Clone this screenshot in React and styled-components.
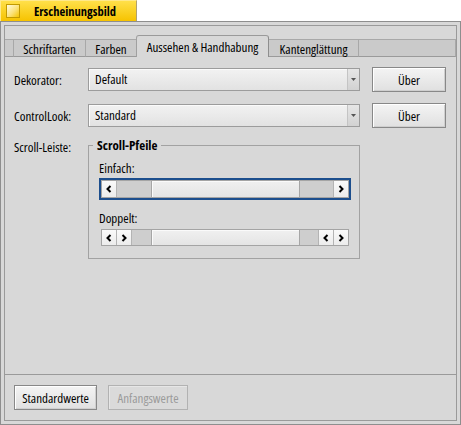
import React from 'react';
import styled, { createGlobalStyle } from 'styled-components';

const Global = createGlobalStyle`
  html, body {
    margin: 0;
    background: #fff;
  }
  body {
    font-family: "Open Sans", "Noto Sans", sans-serif;
    font-stretch: 75%;
    font-size: 13px;
    color: #000;
  }
`;

const Page = styled.div`
  width: 461px;
  height: 425px;
  display: flex;
  flex-direction: column;
`;

const TitleTab = styled.div`
  width: 137px;
  height: 21px;
  box-sizing: border-box;
  display: flex;
  align-items: center;
  padding-left: 5px;
  background: linear-gradient(#ffe04a, #f6c300);
  border-top: 1px solid #ffe98a;
  border-left: 1px solid #ffe98a;
  border-right: 1px solid #b0a170;
`;

const TabIcon = styled.div`
  width: 14px;
  height: 14px;
  box-sizing: border-box;
  border: 1px solid #c29a00;
  background: linear-gradient(135deg, #fffbe0, #fbe27a 55%, #f5c500);
`;

const Title = styled.span`
  flex: 1;
  text-align: center;
  font-weight: 700;
  font-size: 12.5px;
  margin-right: 6px;
`;

const Frame = styled.div`
  flex: 1;
  display: flex;
  border: 1px solid #8e8e8e;
  padding: 3px;
  background: #d8d8d8;
`;

const Inner = styled.div`
  flex: 1;
  display: flex;
  flex-direction: column;
  border: 1px solid #9a9a9a;
  background: #d8d8d8;
`;

const TabStrip = styled.div`
  height: 31px;
  display: flex;
  align-items: flex-end;
`;

const Tab = styled.div`
  box-sizing: border-box;
  width: ${(p) => (p.$w ? `${p.$w}px` : 'auto')};
  flex: ${(p) => (p.$fill ? 1 : 'none')};
  height: ${(p) => (p.$active ? 22 : 18)}px;
  display: flex;
  align-items: center;
  justify-content: center;
  white-space: nowrap;
  background: ${(p) => (p.$active ? '#d8d8d8' : '#cacaca')};
  border-top: 1px solid ${(p) => (p.$active ? '#9a9a9a' : '#a8a8a8')};
  border-right: 1px solid ${(p) => (p.$active ? '#8e8e8e' : '#a8a8a8')};
  border-left: ${(p) => (p.$active ? '1px solid #a0a0a0' : 'none')};
  border-bottom: ${(p) => (p.$active ? 'none' : '1px solid #9a9a9a')};
  border-radius: ${(p) => (p.$active ? '3px 3px 0 0' : '0')};
  padding-top: ${(p) => (p.$active ? 0 : 1)}px;
  margin-left: ${(p) => (p.$active ? -1 : 0)}px;
`;

const Panel = styled.div`
  flex: 1;
  border-bottom: 1px solid #9a9a9a;
  padding: 10px 0 0 9px;
`;

const Form = styled.div`
  display: grid;
  grid-template-columns: 62px 272px 74px;
  grid-template-rows: 25px 25px auto;
  column-gap: 12px;
  row-gap: 11px;
  align-items: center;
`;

const Label = styled.span`
  white-space: nowrap;
  align-self: ${(p) => (p.$top ? 'start' : 'center')};
  line-height: 14px;
  margin-top: ${(p) => (p.$top ? 1 : 0)}px;
`;

const Menu = styled.div`
  height: 23px;
  box-sizing: border-box;
  display: flex;
  border: 1px solid #9c9c9c;
  background: linear-gradient(#f2f2f2, #e2e2e2);
  box-shadow: inset 1px 1px 0 #fbfbfb;
`;

const MenuText = styled.span`
  flex: 1;
  padding-left: 6px;
  line-height: 21px;
`;

const MenuArrow = styled.div`
  width: 11px;
  display: flex;
  align-items: center;
  justify-content: center;
  border-left: 1px solid #c4c4c4;
  background: linear-gradient(#e6e6e6, #d2d2d2);
`;

const Button = styled.div`
  height: 25px;
  box-sizing: border-box;
  display: flex;
  align-items: center;
  justify-content: center;
  padding: 0 8px;
  white-space: nowrap;
  border: 1px solid ${(p) => (p.$disabled ? '#b2b2b2' : '#888')};
  color: ${(p) => (p.$disabled ? '#9a9a9a' : '#000')};
  background: ${(p) =>
    p.$disabled ? '#dadada' : 'linear-gradient(#f4f4f4, #e0e0e0)'};
  box-shadow: ${(p) =>
    p.$disabled ? 'inset 1px 1px 0 #e6e6e6' : 'inset 1px 1px 0 #fff, inset -1px -1px 0 #cfcfcf'};
  width: ${(p) => (p.$w ? `${p.$w}px` : 'auto')};
`;

const Group = styled.fieldset`
  grid-column: 2;
  margin: 0;
  padding: 0 10px 12px 10px;
  border: 1px solid #a2a2a2;
  min-width: 0;
`;

const Legend = styled.legend`
  font-weight: 700;
  font-size: 13px;
  line-height: 12px;
  padding: 0 4px;
  margin-left: -6px;
`;

const SubLabel = styled.div`
  line-height: 16px;
  margin-top: ${(p) => p.$mt}px;
`;

const ScrollBar = styled.div`
  width: 248px;
  height: ${(p) => p.$h}px;
  box-sizing: border-box;
  margin: ${(p) => p.$mt}px 0 0 2px;
  display: flex;
  border: 1px solid #a4a4a4;
  outline: ${(p) => (p.$focus ? '2px solid #1c4e8d' : 'none')};
  background: #cfcfcf;
`;

const ArrowBtn = styled.div`
  width: 14px;
  display: flex;
  align-items: center;
  justify-content: center;
  background: linear-gradient(#fafafa, #ececec);
  border-left: ${(p) => (p.$sepLeft ? '1px solid #b4b4b4' : 'none')};
  border-right: ${(p) => (p.$sepRight ? '1px solid #b4b4b4' : 'none')};
`;

const Track = styled.div`
  flex: 1;
  background: #cecece;
`;

const Thumb = styled.div`
  width: 149px;
  box-sizing: border-box;
  border-left: 1px solid #a6a6a6;
  border-right: 1px solid #a6a6a6;
  background: linear-gradient(#f0f0f0, #e4e4e4);
  box-shadow: inset 1px 1px 0 #fafafa;
`;

const Footer = styled.div`
  height: 45px;
  display: flex;
  align-items: center;
  gap: 11px;
  padding-left: 9px;
`;

const Chevron = ({ dir }) => (
  <svg width="6" height="8" viewBox="0 0 6 8">
    <path
      d={dir === 'left' ? 'M4.5 1 L1.5 4 L4.5 7' : 'M1.5 1 L4.5 4 L1.5 7'}
      fill="none"
      stroke="#000"
      strokeWidth="2"
    />
  </svg>
);

const DownTriangle = () => (
  <svg width="5" height="3" viewBox="0 0 5 3">
    <path d="M0 0 H5 L2.5 3 Z" fill="#555" />
  </svg>
);

function ScrollArrows({ double, side }) {
  if (!double) {
    return side === 'left' ? (
      <ArrowBtn $sepRight>
        <Chevron dir="left" />
      </ArrowBtn>
    ) : (
      <ArrowBtn $sepLeft>
        <Chevron dir="right" />
      </ArrowBtn>
    );
  }
  return (
    <>
      <ArrowBtn $sepLeft={side === 'right'} $sepRight>
        <Chevron dir="left" />
      </ArrowBtn>
      <ArrowBtn $sepRight={side === 'left'}>
        <Chevron dir="right" />
      </ArrowBtn>
    </>
  );
}

function Scroller({ double, focus, mt, h }) {
  return (
    <ScrollBar $focus={focus} $mt={mt} $h={h}>
      <ScrollArrows double={double} side="left" />
      <Track />
      <Thumb />
      <Track />
      <ScrollArrows double={double} side="right" />
    </ScrollBar>
  );
}

export default function App() {
  return (
    <Page>
      <Global />
      <TitleTab>
        <TabIcon />
        <Title>Erscheinungsbild</Title>
      </TitleTab>
      <Frame>
        <Inner>
          <TabStrip>
            <Tab $w={9} />
            <Tab $w={72}>Schriftarten</Tab>
            <Tab $w={51}>Farben</Tab>
            <Tab $w={133} $active>
              Aussehen &amp; Handhabung
            </Tab>
            <Tab $w={90}>Kantenglättung</Tab>
            <Tab $fill />
          </TabStrip>
          <Panel>
            <Form>
              <Label>Dekorator:</Label>
              <Menu>
                <MenuText>Default</MenuText>
                <MenuArrow>
                  <DownTriangle />
                </MenuArrow>
              </Menu>
              <Button>Über</Button>

              <Label>ControlLook:</Label>
              <Menu>
                <MenuText>Standard</MenuText>
                <MenuArrow>
                  <DownTriangle />
                </MenuArrow>
              </Menu>
              <Button>Über</Button>

              <Label $top>Scroll-Leiste:</Label>
              <Group>
                <Legend>Scroll-Pfeile</Legend>
                <SubLabel $mt={9}>Einfach:</SubLabel>
                <Scroller focus mt={4} h={18} />
                <SubLabel $mt={12}>Doppelt:</SubLabel>
                <Scroller double mt={3} h={17} />
              </Group>
            </Form>
          </Panel>
          <Footer>
            <Button $w={83}>Standardwerte</Button>
            <Button $w={80} $disabled>
              Anfangswerte
            </Button>
          </Footer>
        </Inner>
      </Frame>
    </Page>
  );
}
